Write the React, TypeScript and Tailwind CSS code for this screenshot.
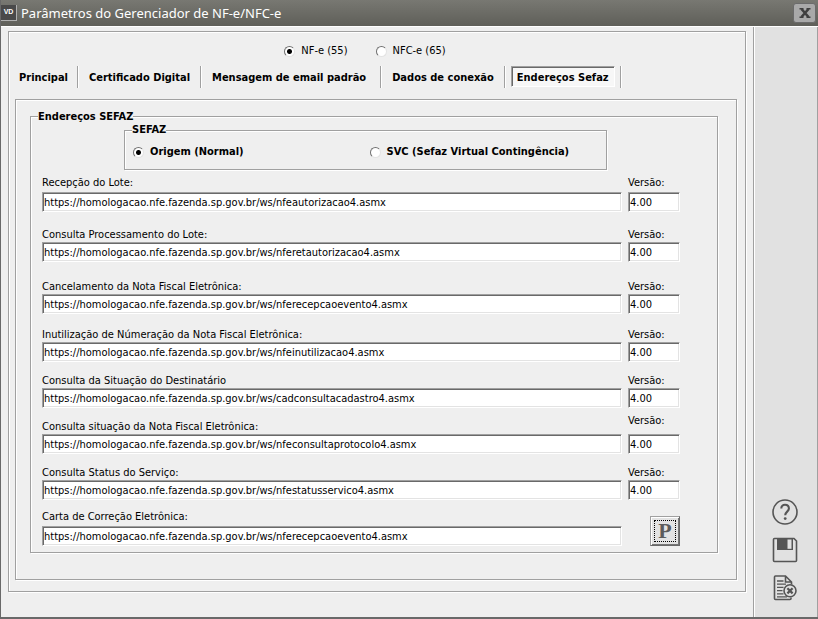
import React from "react";

type Endpoint = {
  id: string;
  label: string;
  url: string;
  version?: string;
  rowClass: string;
  labelClass?: string;
  versionLabelClass?: string;
};

const BASE = "https://homologacao.nfe.fazenda.sp.gov.br/ws/";

const endpoints: Endpoint[] = [
  { id: "recepcao", label: "Recepção do Lote:", url: "nfeautorizacao4.asmx", version: "4.00", rowClass: "mt-1", labelClass: "mb-0.5", versionLabelClass: "mb-0.5" },
  { id: "consulta-lote", label: "Consulta Processamento do Lote:", url: "nferetautorizacao4.asmx", version: "4.00", rowClass: "mt-3.5" },
  { id: "cancelamento", label: "Cancelamento da Nota Fiscal Eletrônica:", url: "nferecepcaoevento4.asmx", version: "4.00", rowClass: "mt-4" },
  { id: "inutilizacao", label: "Inutilização de Númeração da Nota Fiscal Eletrônica:", url: "nfeinutilizacao4.asmx", version: "4.00", rowClass: "mt-3" },
  { id: "destinatario", label: "Consulta da Situação do Destinatário", url: "cadconsultacadastro4.asmx", version: "4.00", rowClass: "mt-2.5" },
  { id: "situacao", label: "Consulta situação da Nota Fiscal Eletrônica:", url: "nfeconsultaprotocolo4.asmx", version: "4.00", rowClass: "mt-1", versionLabelClass: "mb-1.5" },
  { id: "status", label: "Consulta Status do Serviço:", url: "nfestatusservico4.asmx", version: "4.00", rowClass: "mt-2.5" },
  { id: "carta", label: "Carta de Correção Eletrônica:", url: "nferecepcaoevento4.asmx", rowClass: "mt-2", labelClass: "mb-0.5" },
];

const groove =
  "border border-[#a0a0a0] shadow-[1px_1px_0_#fff,inset_1px_1px_0_#fff]";

const sunken =
  "block h-5 w-full rounded-none border border-t-[#a0a0a0] border-r-white border-b-white border-l-[#a0a0a0] bg-white px-px text-[11px] leading-4 text-black shadow-[inset_1px_1px_0_#696969,inset_-1px_-1px_0_#e3e3e3] outline-none";

function Radio({ name, label, checked }: { name: string; label: string; checked?: boolean }) {
  return (
    <label className="flex items-center gap-1.5">
      <input
        type="radio"
        name={name}
        defaultChecked={checked}
        className="size-[11px] shrink-0 appearance-none rounded-full border border-t-[#707070] border-r-[#e3e3e3] border-b-[#e3e3e3] border-l-[#707070] bg-white checked:bg-[radial-gradient(circle,#000_0_2px,#fff_3px)]"
      />
      <span>{label}</span>
    </label>
  );
}

function EndpointRow({ item }: { item: Endpoint }) {
  return (
    <div className={`flex items-end gap-1.5 ${item.rowClass}`}>
      <div className="min-w-0 flex-1">
        <label htmlFor={item.id} className={`block pt-0.5 leading-[14px] ${item.labelClass ?? ""}`}>{item.label}</label>
        <input id={item.id} type="text" defaultValue={BASE + item.url} className={sunken} />
      </div>
      {item.version ? (
        <div className="w-[52px]">
          <label htmlFor={`${item.id}-versao`} className={`block pt-0.5 leading-[14px] ${item.versionLabelClass ?? ""}`}>Versão:</label>
          <input id={`${item.id}-versao`} type="text" defaultValue={item.version} className={sunken} />
        </div>
      ) : (
        <div className="flex w-[52px] justify-end">
          <button
            type="button"
            aria-label="Padrão"
            className="size-[30px] border border-t-[#a0a0a0] border-l-[#a0a0a0] border-r-[#696969] border-b-[#696969] bg-[#e3e3e3] p-[3px] shadow-[inset_1px_1px_0_#fff,inset_-1px_-1px_0_#777]"
          >
            <span className="flex size-full items-center justify-center border border-dotted border-black font-['Liberation_Serif',serif] text-[22px] leading-5 font-bold text-[#5c5c5c]">P</span>
          </button>
        </div>
      )}
    </div>
  );
}

const tabs = ["Principal", "Certificado Digital", "Mensagem de email padrão", "Dados de conexão"];

export default function App() {
  return (
    <div className="flex min-h-screen flex-col border-b-2 border-l border-[#696969] bg-[#efefef] font-['DejaVu_Sans_Condensed','DejaVu_Sans',sans-serif] text-[11px] text-black">
      <header className="flex h-[26px] items-center gap-1 bg-linear-to-b from-[#787872] to-[#5f5f59] pr-0.5">
        <span className="flex size-4 items-center justify-center border-r border-b border-[#b0b0b0] bg-[#4a4a4a] font-['Liberation_Sans',sans-serif] text-[7px] font-bold text-white">VD</span>
        <h1 className="flex-1 font-['Noto_Sans',sans-serif] text-[13px] leading-5 text-white">Parâmetros do Gerenciador de NF-e/NFC-e</h1>
        <button type="button" aria-label="Fechar" className="flex h-5 w-[23px] items-center justify-center rounded-[3px] border border-[#6b6b6b] bg-[#a9a9a9]">
          <svg viewBox="0 0 12 10" className="h-2.5 w-3" fill="none" stroke="#3f3f3f">
            <path d="M2.5 1 9.5 9M9.5 1 2.5 9" strokeWidth="2.6" />
            <path d="M.5 .8H4.5M7.5 .8H11.5M.5 9.2H4.5M7.5 9.2H11.5" strokeWidth="1.6" />
          </svg>
        </button>
      </header>

      <div className="flex flex-1 border-t border-white">
        <main className="min-w-0 flex-1 pt-1 pr-[7px] pb-6 pl-[7px]">
          <div className={`px-1.5 pb-[11px] ${groove}`}>
            <div className="flex justify-center gap-7 pt-3 pr-6 leading-[14px]">
              <Radio name="modelo" label="NF-e (55)" checked />
              <Radio name="modelo" label="NFC-e (65)" />
            </div>

            <div role="tablist" className="mt-2 mb-[11px] flex h-[22px] items-stretch font-bold">
              {tabs.map((tab) => (
                <React.Fragment key={tab}>
                  <button type="button" role="tab" aria-selected="false" className="px-2.5 pt-px leading-5 whitespace-nowrap first:pr-[9px] first:pl-1 nth-[5]:pr-3.5">{tab}</button>
                  <span className="h-[22px] border-l border-[#a0a0a0] bg-white pr-px" />
                </React.Fragment>
              ))}
              <button
                type="button"
                role="tab"
                aria-selected="true"
                className="mx-[5px] h-[21px] border border-t-[#a0a0a0] border-r-white border-b-white border-l-[#a0a0a0] bg-[#f7f7f7] px-[5px] pt-0.5 leading-[18px] whitespace-nowrap shadow-[inset_1px_1px_0_#696969]"
              >
                Endereços Sefaz
              </button>
              <span className="h-[22px] border-l border-[#a0a0a0] bg-white pr-px" />
            </div>

            <div className={`mr-0.5 px-3.5 pt-2 pb-[26px] ${groove}`}>
              <fieldset className={`mr-1 min-w-0 pr-[37px] pb-1.5 pl-[11px] ${groove}`}>
                <legend className="-ml-1 bg-[#efefef] pt-0.5 leading-[14px] font-bold">Endereços SEFAZ</legend>

                <fieldset className={`mr-[73px] ml-[82px] flex h-[46px] items-center px-2 font-bold ${groove}`}>
                  <legend className="-ml-px bg-[#efefef] leading-3">SEFAZ</legend>
                  <div className="grid w-full grid-cols-2 gap-2">
                    <Radio name="sefaz" label="Origem (Normal)" checked />
                    <Radio name="sefaz" label="SVC (Sefaz Virtual Contingência)" />
                  </div>
                </fieldset>

                {endpoints.map((item) => (
                  <EndpointRow key={item.id} item={item} />
                ))}
              </fieldset>
            </div>
          </div>
        </main>

        <aside className="flex w-[65px] flex-col items-center justify-end gap-3 border-r border-l border-[#a0a0a0] bg-[#e1e1e1] pr-0.5 pb-4 text-[#555] shadow-[inset_1px_0_0_#fff]">
          <button type="button" aria-label="Ajuda">
            <svg viewBox="0 0 26 26" className="size-[26px]" fill="none" stroke="currentColor" strokeWidth="1.6">
              <circle cx="13" cy="13" r="12" />
              <path d="M9.3 9.6C9.3 7 10.900 5.800 13 5.800s3.900 1.400 3.900 3.700c0 3.100-3.700 3.200-3.700 6.800" strokeWidth="2.1" />
              <circle cx="13.2" cy="19.600" r="1.4" fill="currentColor" stroke="none" />
            </svg>
          </button>
          <button type="button" aria-label="Salvar">
            <svg viewBox="0 0 26 26" className="size-[26px]" fill="none" stroke="currentColor" strokeWidth="1.6">
              <path d="M1.500 2.500q0-1 1-1H22L24.500 4V23.500q0 1-1 1H2.500q-1 0-1-1Z" />
              <path d="M5 1H21V13H5Z" fill="currentColor" stroke="none" />
              <path d="M15.500 2.500H19.500V11.800H15.500Z" fill="#e1e1e1" stroke="none" />
            </svg>
          </button>
          <button type="button" aria-label="Cancelar">
            <svg viewBox="0 0 26 26" className="size-[26px]" fill="none" stroke="currentColor" strokeWidth="1.6">
              <path d="M19 22.500V23.500q0 1-1 1H3.500q-1 0-1-1V2q0-1 1-1H13.500L19.500 7V9.500M13.500 1V7H19.500" />
              <path d="M5 6H11.500M5 9.200H14M5 12.400H11.500M5 15.600H10.500M5 18.800H11.500M5 21.800H15" strokeWidth="1.3" />
              <circle cx="18" cy="15.800" r="6" fill="#e1e1e1" />
              <path d="M15.400 13.200 20.600 18.400M20.600 13.200 15.400 18.400" strokeWidth="2.2" />
            </svg>
          </button>
        </aside>
      </div>
    </div>
  );
}
